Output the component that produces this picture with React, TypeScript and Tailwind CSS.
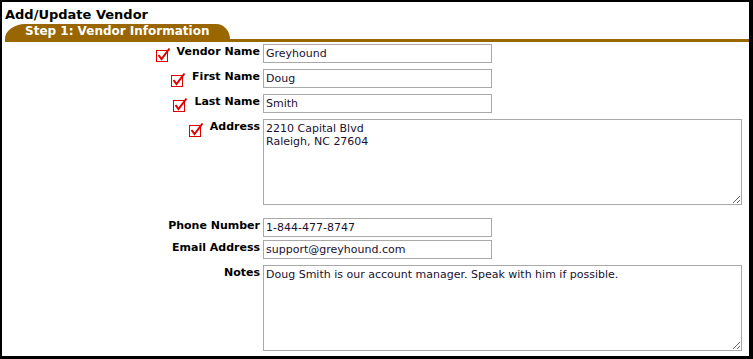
import React from "react";

const BROWN = "#996600";

function Check() {
  return (
    <svg width="15" height="15" viewBox="0 0 15 15" className="block shrink-0">
      <rect x="0.5" y="3.5" width="11" height="11" fill="none" stroke="#e00000" strokeWidth="1" />
      <path d="M2.5 8 L5.5 12 L13.5 1.5" fill="none" stroke="#e00000" strokeWidth="2" />
    </svg>
  );
}

function Label({ text, check }: { text: string; check?: boolean }) {
  return (
    <div className="w-[258px] shrink-0 flex justify-end items-start">
      {check && (
        <div className="mt-[3px] mr-[6px]">
          <Check />
        </div>
      )}
      <div className="font-bold text-[11px] leading-[13px] pt-[1px] text-black whitespace-nowrap">{text}</div>
    </div>
  );
}

function InputRow({ label, value, check, mt }: { label: string; value: string; check?: boolean; mt: string }) {
  return (
    <div className={"flex items-start " + mt}>
      <Label text={label} check={check} />
      <input
        readOnly
        value={value}
        className="block ml-[3px] w-[229px] h-[19px] border border-[#a9a9a9] px-[2px] text-[11px] leading-[13px] text-[#1a1030] bg-white outline-none"
        style={{ fontFamily: "'DejaVu Sans', Verdana, sans-serif" }}
      />
    </div>
  );
}

function AreaRow({ label, value, check, mt }: { label: string; value: string; check?: boolean; mt: string }) {
  return (
    <div className={"flex items-start " + mt}>
      <Label text={label} check={check} />
      <textarea
        readOnly
        value={value}
        className="block ml-[3px] w-[479px] h-[86px] border border-[#a9a9a9] px-[2px] py-[2px] text-[11px] leading-[13px] text-[#1a1030] bg-white outline-none"
        style={{ fontFamily: "'DejaVu Sans', Verdana, sans-serif" }}
      />
    </div>
  );
}

export default function App() {
  return (
    <div
      className="w-[753px] h-[359px] box-border bg-white border-t-2 border-l-2 border-r-4 border-b-[3px] border-black overflow-hidden"
      style={{ fontFamily: "'DejaVu Sans', Verdana, sans-serif" }}
    >
      <div className="pl-[3px] pt-[5px] text-[13px] leading-[15px] font-bold text-black">Add/Update Vendor</div>
      <div className="pl-[3px] mt-[2px]">
        <div
          className="w-[225px] h-[15px] pl-[20px] text-[12px] leading-[15px] font-bold text-white whitespace-nowrap"
          style={{ backgroundColor: BROWN, borderRadius: "20px 14px 0 0 / 15px 15px 0 0" }}
        >
          Step 1: Vendor Information
        </div>
        <div className="h-[3px]" style={{ backgroundColor: BROWN }} />
      </div>
      <div className="flex flex-col">
        <InputRow label="Vendor Name" value="Greyhound" check mt="mt-[2px]" />
        <InputRow label="First Name" value="Doug" check mt="mt-[6px]" />
        <InputRow label="Last Name" value="Smith" check mt="mt-[6px]" />
        <AreaRow label="Address" value={"2210 Capital Blvd\nRaleigh, NC 27604"} check mt="mt-[6px]" />
        <InputRow label="Phone Number" value="1-844-477-8747" mt="mt-[13px]" />
        <InputRow label="Email Address" value="support@greyhound.com" mt="mt-[3px]" />
        <AreaRow label="Notes" value="Doug Smith is our account manager. Speak with him if possible." mt="mt-[6px]" />
      </div>
    </div>
  );
}
